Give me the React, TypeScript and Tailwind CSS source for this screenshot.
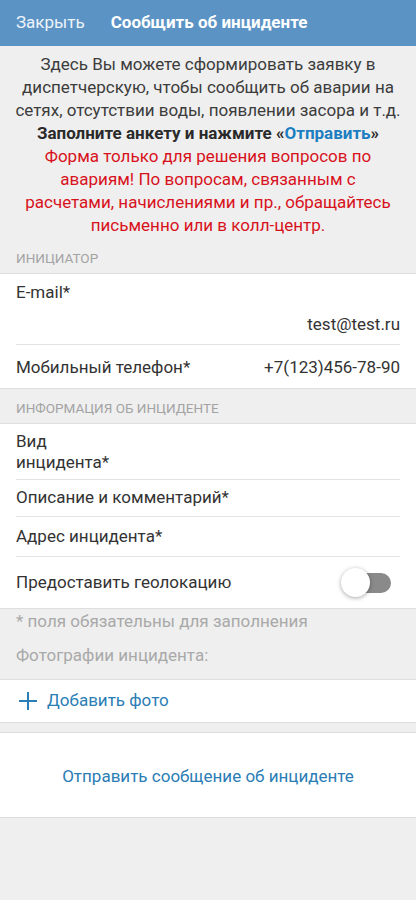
import React from "react";

const font = { fontFamily: "Roboto, 'Noto Sans', sans-serif" };

function SectionTitle({ children }: { children: React.ReactNode }) {
  return (
    <div className="h-[34px] px-4 pt-[11px] text-[13.5px] leading-[16px] uppercase text-[#a3a3a3]">
      {children}
    </div>
  );
}

function Divider() {
  return <div className="mx-4 h-px bg-[#e3e3e3]" />;
}

export default function App() {
  return (
    <div className="min-h-[900px] bg-[#efefef] text-[#333]" style={font}>
      {/* Header */}
      <header className="flex h-[46px] items-center bg-[#5b93c5] px-4 text-[17px]">
        <span className="text-[#eef4fa]">Закрыть</span>
        <span className="ml-[26px] font-bold text-white">Сообщить об инциденте</span>
      </header>

      {/* Intro */}
      <div className="px-3 pt-[7px] pb-0 text-center text-[17px] leading-[23px]">
        <p className="text-[#3c3c3c]">
          Здесь Вы можете сформировать заявку в диспетчерскую, чтобы сообщить об аварии на сетях,
          отсутствии воды, появлении засора и т.д.
        </p>
        <p className="font-bold text-[#2a2a2a]">
          Заполните анкету и нажмите «<span className="text-[#1c7ec0]">Отправить</span>»
        </p>
        <p className="text-[#d8121c]">
          Форма только для решения вопросов по
          <br />
          авариям! По вопросам, связанным с
          <br />
          расчетами, начислениями и пр., обращайтесь
          <br />
          письменно или в колл-центр.
        </p>
      </div>

      <div className="h-[2px]" />
      <SectionTitle>Инициатор</SectionTitle>

      <div className="border-y border-[#dedede] bg-white text-[17px] leading-[22px]">
        <div className="px-4 pt-[7px] pb-[9px]">
          <div>E-mail*</div>
          <div className="mt-[10px] text-right">test@test.ru</div>
        </div>
        <Divider />
        <div className="flex h-[43px] items-center justify-between px-4">
          <span>Мобильный телефон*</span>
          <span>+7(123)456-78-90</span>
        </div>
      </div>

      <SectionTitle>Информация об инциденте</SectionTitle>

      <div className="border-y border-[#dedede] bg-white text-[17px]">
        <div className="px-4 pt-[7px] pb-[6px] leading-[21px]">
          <div>Вид</div>
          <div>инцидента*</div>
        </div>
        <Divider />
        <div className="flex h-[36px] items-center px-4">Описание и комментарий*</div>
        <Divider />
        <div className="flex h-[39px] items-center px-4">Адрес инцидента*</div>
        <Divider />
        <div className="flex h-[51px] items-center justify-between pl-4 pr-[25px]">
          <span>Предоставить геолокацию</span>
          <div className="relative h-[20px] w-[48px]">
            <div className="absolute right-0 top-0 h-[20px] w-[42px] rounded-full bg-[#8a8a8a]" />
            <div className="absolute left-[-2px] top-[-5px] h-[29px] w-[29px] rounded-full bg-white shadow-[0_1px_4px_rgba(0,0,0,0.35)]" />
          </div>
        </div>
      </div>

      <div className="px-4 pt-[1px] pb-[13px] text-[17px] leading-[22px] text-[#a9a9a9]">
        <div>* поля обязательны для заполнения</div>
        <div className="mt-[12px]">Фотографии инцидента:</div>
      </div>

      <div className="flex h-[44px] items-center border-y border-[#dedede] bg-white px-4 text-[17px] text-[#2a7db5]">
        <svg width="22" height="22" viewBox="0 0 22 22" className="ml-[1px]">
          <path d="M11 2v18M2 11h18" stroke="#2a7db5" strokeWidth="2" fill="none" />
        </svg>
        <span className="ml-[8px]">Добавить фото</span>
      </div>

      <div className="h-[9px]" />

      <div className="flex h-[86px] items-center justify-center border-y border-[#dedede] bg-white pt-[3px] text-[17px] text-[#2a7db5]">
        Отправить сообщение об инциденте
      </div>
    </div>
  );
}
